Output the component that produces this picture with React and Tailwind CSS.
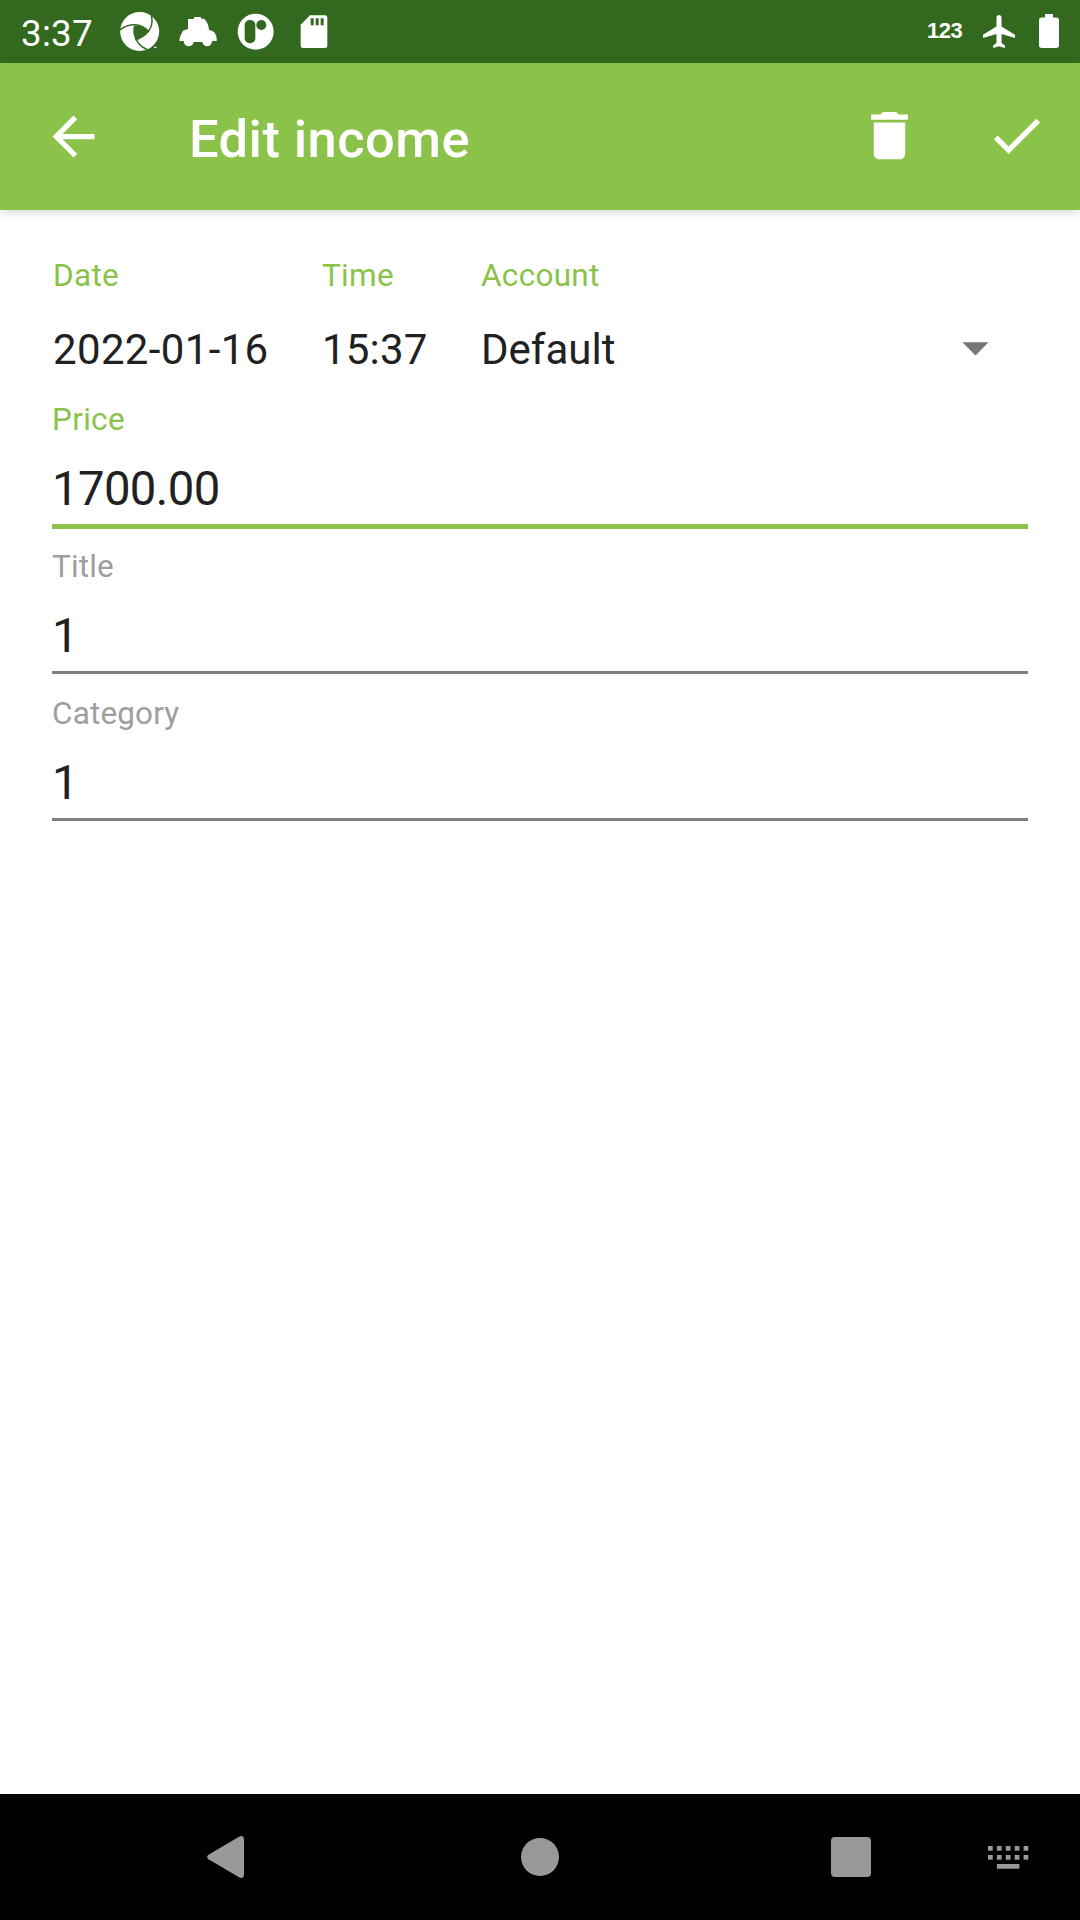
const Icon = ({ d, className = "" }) => (
  <svg viewBox="0 0 24 24" fill="currentColor" className={"size-[63px] shrink-0 " + className}>
    <path d={d} />
  </svg>
);

function StatusBar() {
  return (
    <header className="flex h-[63px] shrink-0 items-start bg-[#33691e] pl-[21px] text-white">
      <span className="mt-3 w-[72px] text-[36.75px] leading-[43px] tracking-[0.25px]">3:37</span>
      {/* aperture */}
      <svg viewBox="360 36 120 120" className="ml-[27px] mt-3 size-10">
        <circle cx="419" cy="94.500" r="58.500" fill="white" />
        <path
          d="M405 77Q428 76 445 93Q430 112 408 118Q399 97 405 77Z"
          fill="#33691e"
        />
        <g fill="none" stroke="#33691e" strokeWidth="4.500">
          <path d="M358 91Q379 73 407 74Q431 76 447 96" />
          <path d="M454 44Q461 76 445 94Q429 114 406 119" />
          <path d="M404 77Q397 103 414 128Q424 142 442 149" />
        </g>
        <path d="M438 151L462 140L470 148L446 160Z" fill="#33691e" />
        <path d="M462 142h8" stroke="white" strokeWidth="3" />
      </svg>
      {/* car */}
      <svg viewBox="537 48 117 96" className="ml-[19px] mt-4 h-8 w-[39px]" fill="white">
        <path d="M582 51H603V56H612Q626 69 627 90Q642 92 647 104Q651 112 650 123H636Q635 138 622 139Q609 138 607 126H581Q578 139 565 139Q552 138 551 123H538Q538 110 543 104L549 92L564 87V57H582Z" />
      </svg>
      {/* round badge */}
      <svg viewBox="712 39 114 114" className="ml-[19px] mt-[13px] size-[38px]">
        <circle cx="768" cy="95" r="54" fill="white" />
        <rect x="735" y="60" width="32" height="70" rx="15" fill="#33691e" />
        <circle cx="785" cy="75" r="15" fill="#33691e" />
      </svg>
      {/* memory card */}
      <svg viewBox="900 45 84 102" className="ml-[25px] mt-[15px] h-[34px] w-7">
        <path
          d="M930 46H975Q982 46 982 53V137Q982 144 975 144H909Q902 144 902 137V74Z"
          fill="white"
        />
        <path d="M932 55h9v21h-9zM947 55h9v21h-9zM962 55h9v21h-9z" fill="#33691e" />
      </svg>
      <div className="ml-auto flex items-start">
        <span className="mt-[18px] w-9 font-['Liberation_Sans',sans-serif] text-[22px] font-bold leading-[25px] tracking-[-0.5px]">
          123
        </span>
        <svg viewBox="2 2 19 20" className="ml-5 mt-[15px] h-[33px] w-8" fill="white" preserveAspectRatio="none">
          <path d="M21 16v-2l-8-5V3.500c0-.83-.67-1.500-1.500-1.500S10 2.670 10 3.500V9l-8 5v2l8-2.500V19l-2 1.500V22l3.500-1 3.500 1v-1.500L13 19v-5.500l8 2.500z" />
        </svg>
        <svg viewBox="7 2 10 20" className="ml-6 mr-[21px] mt-3.5 h-[34px] w-5" fill="white" preserveAspectRatio="none">
          <path d="M15.670 4H14V2h-4v2H8.330C7.600 4 7 4.600 7 5.330v15.330C7 21.400 7.600 22 8.330 22h7.330c.74 0 1.340-.6 1.340-1.330V5.330C17 4.600 16.400 4 15.670 4z" />
        </svg>
      </div>
    </header>
  );
}

function Toolbar() {
  return (
    <nav className="flex h-[147px] shrink-0 items-start bg-[#8bc34a] text-white shadow-[0_3px_9px_rgba(0,0,0,0.14)]">
      <Icon
        className="ml-[42px] mt-[42px]"
        d="M20 11H7.830l5.590-5.590L12 4l-8 8 8 8 1.410-1.410L7.830 13H20v-2z"
      />
      <h1 className="ml-[84px] mt-[45px] text-[52.500px] font-medium leading-[62px] tracking-[0.42px]">
        Edit income
      </h1>
      <Icon
        className="ml-auto mt-[41px]"
        d="M6 19c0 1.100.9 2 2 2h8c1.100 0 2-.9 2-2V7H6v12zM19 4h-3.500l-1-1h-5l-1 1H5v2h14V4z"
      />
      <Icon
        className="ml-16 mr-8 mt-[41px]"
        d="M9 16.170L4.830 12l-1.420 1.410L9 19 21 7l-1.410-1.410z"
      />
    </nav>
  );
}

function Picker({ label, value, className, valueClass, children }) {
  return (
    <div className={className}>
      <div className="text-[31.500px] leading-[37px] tracking-[0.3px] text-[#8bc34a]">{label}</div>
      <div className="mt-[31px] flex h-[49px] items-center justify-between text-[42px] leading-[49px]">
        <span className={valueClass}>{value}</span>
        {children}
      </div>
    </div>
  );
}

function Field({ label, value, active }) {
  return (
    <div className="flex h-[147px] flex-col">
      <div
        className={
          "text-[31.500px] leading-[37px] " +
          (active ? "tracking-[0.3px] text-[#8bc34a]" : "tracking-[0.15px] text-[#9e9e9e]")
        }
      >
        {label}
      </div>
      <div className="mt-[23px] text-[47.250px] leading-[56px] tracking-[-0.6px]">
        {value}
      </div>
      <div className={active ? "mt-[7px] h-[5px] bg-[#8bc34a]" : "mt-[7px] h-[3px] bg-[#7f7f7f]"} />
    </div>
  );
}

function NavigationBar() {
  return (
    <footer className="flex h-[126px] shrink-0 items-center bg-black text-[#999999]">
      <svg viewBox="0 0 37 42" className="ml-[207px] h-[42px] w-[37px]" fill="currentColor">
        <path d="M1.500 18.800L32 .8Q37 -1.500 37 4V38Q37 43.500 32 41.200L1.500 23.200Q-1.300 21 1.500 18.800Z" />
      </svg>
      <div className="ml-[277px] size-[38px] rounded-full bg-[#999999]" />
      <div className="ml-[272px] size-10 rounded bg-[#999999]" />
      <svg viewBox="0 0 41 23" className="ml-[116.500px] h-[23px] w-[41px]" fill="currentColor">
        {[0, 1, 2, 3, 4].map((i) => (
          <g key={i}>
            <rect x={i * 8.900} y="0" width="4.700" height="4.700" />
            <rect x={i * 8.900} y="9" width="4.700" height="4.700" />
          </g>
        ))}
        <rect x="8.900" y="18" width="22.500" height="4.700" />
      </svg>
    </footer>
  );
}

export default function App() {
  return (
    <div className="flex h-[1920px] w-[1080px] flex-col overflow-hidden bg-white font-['Roboto',sans-serif] text-[#212121]">
      <StatusBar />
      <Toolbar />
      <main className="grow px-[52px] pt-[47px]">
        <div className="flex h-[144px] pl-px">
          <Picker
            label="Date"
            value="2022-01-16"
            className="w-[269px]"
            valueClass="tracking-[0.35px]"
          />
          <Picker label="Time" value="15:37" className="w-[159px]" valueClass="tracking-[0.2px]" />
          <Picker label="Account" value="Default" className="w-[526px]">
            <Icon className="mt-[-4px] text-[#757575]" d="M7 10l5 5 5-5z" />
          </Picker>
        </div>
        <Field label="Price" value="1700.00" active />
        <Field label="Title" value="1" />
        <Field label="Category" value="1" />
      </main>
      <NavigationBar />
    </div>
  );
}
